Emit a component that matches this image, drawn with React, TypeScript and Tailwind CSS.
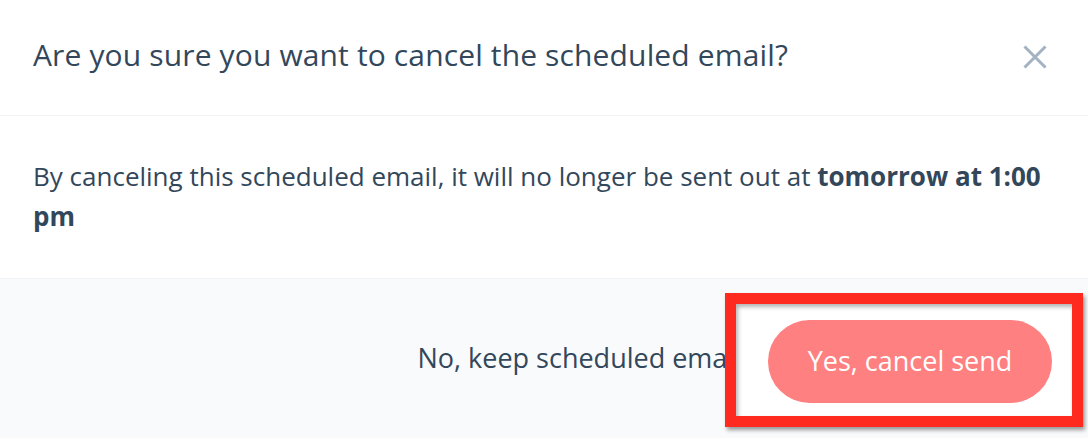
import React from "react";

export default function App() {
  return (
    <div className="relative w-[1088px] h-[438px] bg-white overflow-hidden text-[#33475b]" style={{ fontFamily: "'Open Sans', sans-serif" }}>
      <div className="flex items-center justify-between h-[116px] pl-[33px] pr-[41px] border-b border-[#f0f2f4]">
        <h1 className="text-[30px] leading-[30px] font-normal tracking-[0.14px] -mt-[6px]">Are you sure you want to cancel the scheduled email?</h1>
        <svg width="24" height="24" viewBox="0 0 24 24" className="shrink-0 -mt-[2px]">
          <path d="M1.5 1.5 L22.5 22.5 M22.5 1.5 L1.5 22.5" stroke="#a3b2c2" strokeWidth="3" />
        </svg>
      </div>
      <div className="h-[163px] px-[33px] pt-[40px] border-b border-[#f0f2f4]">
        <p className="text-[26px] leading-[40px]">
          By canceling this scheduled email, it will no longer be sent out at <span className="font-bold">tomorrow at 1:00 pm</span>
        </p>
      </div>
      <div className="flex items-center justify-end h-[159px] bg-[#f9fafb] pr-[36px] gap-[27px]">
        <span className="text-[27px]">No, keep scheduled email</span>
        <button className="relative z-20 w-[284px] h-[83px] mt-[6px] rounded-full bg-[#ff8080] text-white text-[27px]">Yes, cancel send</button>
      </div>
      <div className="absolute z-10 left-[725px] top-[293px] w-[358px] h-[134px] border-[11px] border-[#ff2a1f] bg-white shadow-[2px_3px_4px_rgba(0,0,0,0.4),inset_2px_3px_4px_rgba(0,0,0,0.3)]" />
    </div>
  );
}
